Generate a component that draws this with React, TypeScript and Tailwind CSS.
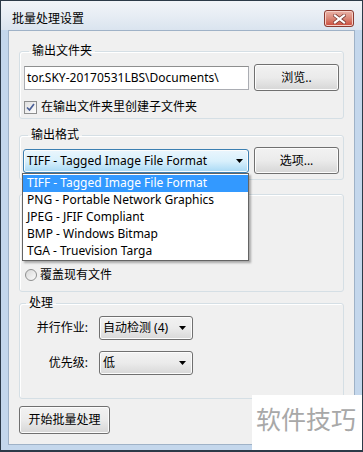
import React from 'react';

const formats = [
  'TIFF - Tagged Image File Format',
  'PNG - Portable Network Graphics',
  'JPEG - JFIF Compliant',
  'BMP - Windows Bitmap',
  'TGA - Truevision Targa',
];

function Arrow() {
  return (
    <svg width="7" height="4" viewBox="0 0 7 4" className="shrink-0">
      <path d="M0 0H7L3.5 4Z" fill="#000" />
    </svg>
  );
}

function Button({ label, className }: { label: string; className: string }) {
  return (
    <button
      className={
        'flex items-center justify-center rounded-[3px] border border-[#707070] bg-gradient-to-b from-[#f2f2f2] via-[#ebebeb] to-[#d6d6d6] text-[12px] text-black shadow-[inset_0_0_0_1px_#fcfcfc] ' +
        className
      }
    >
      {label}
    </button>
  );
}

function Combo({ value, className }: { value: string; className: string }) {
  return (
    <div
      className={
        'flex h-[24px] items-center justify-between rounded-[3px] border border-[#707070] bg-gradient-to-b from-[#f2f2f2] via-[#ebebeb] to-[#d8d8d8] pl-[3px] pr-[6px] shadow-[inset_0_0_0_1px_#fcfcfc] ' +
        className
      }
    >
      <span>{value}</span>
      <Arrow />
    </div>
  );
}

export default function App() {
  return (
    <div className="relative flex h-[452px] w-[363px] flex-col overflow-hidden border border-b-[2px] border-[#2c3a48] bg-[#c4d7ec] font-['Noto_Sans','Noto_Sans_CJK_SC',sans-serif] text-[12px] leading-[16px] text-black">
      {/* title bar */}
      <div className="flex h-[29px] shrink-0 items-start justify-between bg-gradient-to-b from-[#f1f4f8] via-[#e7edf4] to-[#dae4ef] pl-[11px] pr-[8px]">
        <span className="mt-[10px] text-[12px] leading-[16px] text-black">批量处理设置</span>
        <div className="mt-[9px] flex h-[17px] w-[30px] items-center justify-center rounded-[3px] border border-[#8a3a30] bg-gradient-to-b from-[#eab3a8] via-[#d98676] to-[#c9483a] shadow-[inset_0_0_0_1px_#f6cfc7]">
          <svg width="13" height="10" viewBox="0 0 13 10">
            <path d="M2 1.5L11 8.5M11 1.5L2 8.5" stroke="#7a3a33" strokeWidth="3.6" strokeLinecap="square" />
            <path d="M2 1.5L11 8.5M11 1.5L2 8.5" stroke="#fff" strokeWidth="2.2" strokeLinecap="square" />
          </svg>
        </div>
      </div>

      {/* client area */}
      <div className="mx-[7px] mb-[5px] flex flex-1 flex-col border border-[#9fb2c7] bg-[#f0f0f0] px-[10px]">
        {/* 输出文件夹 */}
        <fieldset className="mt-[12px] rounded-[3px] border border-[#d5dfe5] px-[4px] pb-[3px] shadow-[inset_1px_1px_0_#fff]">
          <legend className="ml-[5px] px-[3px] text-[12px] leading-[16px]">输出文件夹</legend>
          <div className="flex items-center gap-[5px] pt-[5px]">
            <div className="flex h-[24px] w-[225px] items-center border border-[#abadb3] border-t-[#8e8f8f] bg-white pl-[2px] text-[12px]">
              tor.SKY-20170531LBS\Documents\
            </div>
            <Button label="浏览.." className="h-[27px] w-[85px]" />
          </div>
          <div className="mt-[8px] flex items-center gap-[4px]">
            <div className="flex h-[13px] w-[13px] items-center justify-center border border-[#8e8f8f] bg-gradient-to-br from-[#e0e0e0] to-[#fdfdfd]">
              <svg width="9" height="9" viewBox="0 0 9 9">
                <path d="M1 4.5L3.5 7L8 1" stroke="#4a5f97" strokeWidth="1.7" fill="none" />
              </svg>
            </div>
            <span>在输出文件夹里创建子文件夹</span>
          </div>
        </fieldset>

        {/* 输出格式 */}
        <fieldset className="mt-[8px] rounded-[3px] border border-[#d5dfe5] px-[3px] pb-[5px] shadow-[inset_1px_1px_0_#fff]">
          <legend className="ml-[5px] px-[3px] text-[12px] leading-[16px]">输出格式</legend>
          <div className="flex items-center gap-[5px] pt-[4px]">
            <div className="relative">
              <div className="flex h-[24px] w-[226px] items-center justify-between rounded-[3px] border border-[#3c7fb1] bg-gradient-to-b from-[#eaf6fd] via-[#d9f0fc] to-[#a7d9f5] pl-[3px] pr-[5px] shadow-[inset_0_0_0_1px_#fcfcfc]">
                <span>TIFF - Tagged Image File Format</span>
                <Arrow />
              </div>
              <div className="absolute left-[-1px] top-[24px] z-10 w-[227px] border border-[#646464] bg-white pt-[1px] shadow-[2px_2px_2px_rgba(0,0,0,0.3)]">
                {formats.map((f, i) => (
                  <div
                    key={f}
                    className={
                      i === 0
                        ? 'flex h-[17px] items-center bg-[#3399ff] pl-[4px] text-white'
                        : 'flex h-[17px] items-center pl-[4px] text-black'
                    }
                  >
                    {f}
                  </div>
                ))}
              </div>
            </div>
            <Button label="选项..." className="h-[27px] w-[85px]" />
          </div>
        </fieldset>

        {/* 文件存在时 (hidden by the list) */}
        <div className="mt-[14px] flex h-[98px] flex-col justify-end rounded-[3px] border border-[#d5dfe5] px-[5px] pb-[8px] shadow-[inset_1px_1px_0_#fff]">
          <div className="flex items-center gap-[3px]">
            <div className="h-[12px] w-[12px] rounded-full border border-[#8e8f8f] bg-gradient-to-br from-[#d8d8d8] to-[#fbfbfb]" />
            <span>覆盖现有文件</span>
          </div>
        </div>

        {/* 处理 */}
        <fieldset className="mt-[3px] rounded-[3px] border border-[#d5dfe5] px-[1px] pb-[23px] shadow-[inset_1px_1px_0_#fff]">
          <legend className="ml-[5px] px-[3px] text-[12px] leading-[16px]">处理</legend>
          <div className="flex flex-col gap-[11px] pt-[5px]">
            <div className="flex items-center gap-[11px]">
              <span className="w-[67px] text-right">并行作业:</span>
              <Combo value="自动检测 (4)" className="w-[94px]" />
            </div>
            <div className="flex items-center gap-[11px]">
              <span className="w-[67px] text-right">优先级:</span>
              <Combo value="低" className="w-[94px]" />
            </div>
          </div>
        </fieldset>

        <Button label="开始批量处理" className="mt-[7px] h-[28px] w-[91px]" />
      </div>

      {/* watermark */}
      <div className="absolute bottom-0 right-0 flex h-[55px] w-[110px] items-start bg-white pl-[4px] pt-[9px]">
        <span className="text-[25px] leading-[30px] text-[#a8a8a8]">软件技巧</span>
      </div>
    </div>
  );
}
